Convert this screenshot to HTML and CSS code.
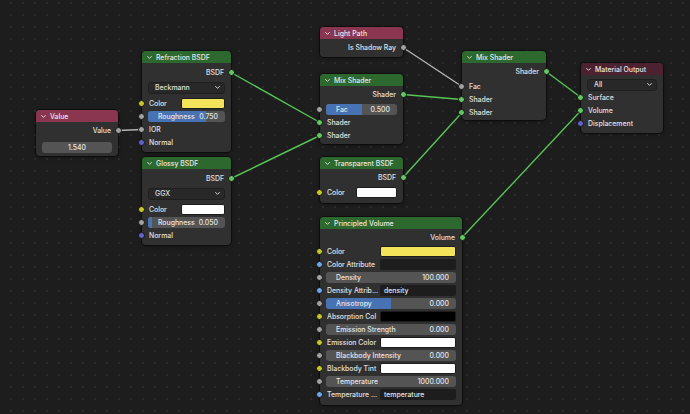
FILE: index.html
```html
<!DOCTYPE html>
<html>
<head>
<meta charset="utf-8">
<link rel="stylesheet" href="styles.css">
</head>
<body>
<div class="canvas">
  <svg class="links" width="690" height="414" viewBox="0 0 690 414">
    <line class="l-grey" x1="118" y1="130.5" x2="142" y2="129.5"/>
    <line class="l-green" x1="231" y1="72.5" x2="320" y2="122.5"/>
    <line class="l-green" x1="231" y1="178.5" x2="320" y2="135.5"/>
    <line class="l-grey" x1="403" y1="47.5" x2="462" y2="86.5"/>
    <line class="l-green" x1="403" y1="94.5" x2="462" y2="99.5"/>
    <line class="l-green" x1="403" y1="177.5" x2="462" y2="112.5"/>
    <line class="l-green" x1="546" y1="71.5" x2="581" y2="97.5"/>
    <line class="l-green" x1="462" y1="237.5" x2="581" y2="110.5"/>
  </svg>

  <!-- Value -->
  <div class="node n-value">
    <div class="hdr red"><svg class="chev" viewBox="0 0 8 8"><path d="M1.5 2.5 L4 5 L6.5 2.5"/></svg>Value</div>
    <div class="body pt2 pb2">
      <div class="row out">Value<span class="sock grey"></span></div>
      <div class="row mt4"><div class="num full center">1.540</div></div>
    </div>
  </div>

  <!-- Refraction BSDF -->
  <div class="node n-refr">
    <div class="hdr green"><svg class="chev" viewBox="0 0 8 8"><path d="M1.5 2.5 L4 5 L6.5 2.5"/></svg>Refraction BSDF</div>
    <div class="body pt3 pb3">
      <div class="row out">BSDF<span class="sock green"></span></div>
      <div class="row mt2"><div class="drop">Beckmann<svg class="dchev" viewBox="0 0 8 8"><path d="M1.5 2.5 L4 5 L6.5 2.5"/></svg></div></div>
      <div class="row mt3"><span class="sock yellow"></span><span class="lbl">Color</span><span class="swatch sw-yellow sw-small"></span></div>
      <div class="row"><span class="sock grey"></span><div class="slider full"><div class="fill" style="width:75%"></div><span class="sl-lbl">Roughness</span><span class="sl-val">0.750</span></div></div>
      <div class="row"><span class="sock grey"></span><span class="lbl">IOR</span></div>
      <div class="row"><span class="sock purple"></span><span class="lbl">Normal</span></div>
    </div>
  </div>

  <!-- Glossy BSDF -->
  <div class="node n-glossy">
    <div class="hdr green"><svg class="chev" viewBox="0 0 8 8"><path d="M1.5 2.5 L4 5 L6.5 2.5"/></svg>Glossy BSDF</div>
    <div class="body pt3 pb3">
      <div class="row out">BSDF<span class="sock green"></span></div>
      <div class="row mt2"><div class="drop">GGX<svg class="dchev" viewBox="0 0 8 8"><path d="M1.5 2.5 L4 5 L6.5 2.5"/></svg></div></div>
      <div class="row mt3"><span class="sock yellow"></span><span class="lbl">Color</span><span class="swatch sw-white sw-small"></span></div>
      <div class="row"><span class="sock grey"></span><div class="slider full"><div class="fill" style="width:5%"></div><span class="sl-lbl">Roughness</span><span class="sl-val">0.050</span></div></div>
      <div class="row"><span class="sock purple"></span><span class="lbl">Normal</span></div>
    </div>
  </div>

  <!-- Light Path -->
  <div class="node n-light">
    <div class="hdr red"><svg class="chev" viewBox="0 0 8 8"><path d="M1.5 2.5 L4 5 L6.5 2.5"/></svg>Light Path</div>
    <div class="body pt2 pb3">
      <div class="row out">Is Shadow Ray<span class="sock grey"></span></div>
    </div>
  </div>

  <!-- Mix Shader 1 -->
  <div class="node n-mix1">
    <div class="hdr green"><svg class="chev" viewBox="0 0 8 8"><path d="M1.5 2.5 L4 5 L6.5 2.5"/></svg>Mix Shader</div>
    <div class="body pt2 pb2">
      <div class="row out">Shader<span class="sock green"></span></div>
      <div class="row mt2"><span class="sock grey"></span><div class="slider full"><div class="fill" style="width:50%"></div><span class="sl-lbl">Fac</span><span class="sl-val">0.500</span></div></div>
      <div class="row"><span class="sock green"></span><span class="lbl">Shader</span></div>
      <div class="row"><span class="sock green"></span><span class="lbl">Shader</span></div>
    </div>
  </div>

  <!-- Transparent BSDF -->
  <div class="node n-transp">
    <div class="hdr green"><svg class="chev" viewBox="0 0 8 8"><path d="M1.5 2.5 L4 5 L6.5 2.5"/></svg>Transparent BSDF</div>
    <div class="body pt2 pb4">
      <div class="row out">BSDF<span class="sock green"></span></div>
      <div class="row mt2"><span class="sock yellow"></span><span class="lbl">Color</span><span class="swatch sw-white sw-t"></span></div>
    </div>
  </div>

  <!-- Principled Volume -->
  <div class="node n-vol">
    <div class="hdr green"><svg class="chev" viewBox="0 0 8 8"><path d="M1.5 2.5 L4 5 L6.5 2.5"/></svg>Principled Volume</div>
    <div class="body pt2 pb4">
      <div class="row out">Volume<span class="sock green"></span></div>
      <div class="row mt1"><span class="sock yellow"></span><span class="lbl">Color</span><span class="swatch sw-yellow sw-wide"></span></div>
      <div class="row"><span class="sock blue"></span><span class="lbl">Color Attribute</span><span class="text sw-wide"></span></div>
      <div class="row"><span class="sock grey"></span><div class="slider full"><span class="sl-lbl">Density</span><span class="sl-val">100.000</span></div></div>
      <div class="row"><span class="sock blue"></span><span class="lbl">Density Attrib...</span><span class="text sw-wide">density</span></div>
      <div class="row"><span class="sock grey"></span><div class="slider full"><div class="fill" style="width:50%"></div><span class="sl-lbl">Anisotropy</span><span class="sl-val">0.000</span></div></div>
      <div class="row"><span class="sock yellow"></span><span class="lbl">Absorption Col</span><span class="swatch sw-black sw-wide"></span></div>
      <div class="row"><span class="sock grey"></span><div class="slider full"><span class="sl-lbl">Emission Strength</span><span class="sl-val">0.000</span></div></div>
      <div class="row"><span class="sock yellow"></span><span class="lbl">Emission Color</span><span class="swatch sw-white sw-wide"></span></div>
      <div class="row"><span class="sock grey"></span><div class="slider full"><span class="sl-lbl">Blackbody Intensity</span><span class="sl-val">0.000</span></div></div>
      <div class="row"><span class="sock yellow"></span><span class="lbl">Blackbody Tint</span><span class="swatch sw-white sw-wide"></span></div>
      <div class="row"><span class="sock grey"></span><div class="slider full"><span class="sl-lbl">Temperature</span><span class="sl-val">1000.000</span></div></div>
      <div class="row"><span class="sock blue"></span><span class="lbl">Temperature ...</span><span class="text sw-wide">temperature</span></div>
    </div>
  </div>

  <!-- Mix Shader 2 -->
  <div class="node n-mix2">
    <div class="hdr green"><svg class="chev" viewBox="0 0 8 8"><path d="M1.5 2.5 L4 5 L6.5 2.5"/></svg>Mix Shader</div>
    <div class="body pt2 pb1">
      <div class="row out">Shader<span class="sock green"></span></div>
      <div class="row mt2"><span class="sock grey"></span><span class="lbl">Fac</span></div>
      <div class="row"><span class="sock green"></span><span class="lbl">Shader</span></div>
      <div class="row"><span class="sock green"></span><span class="lbl">Shader</span></div>
    </div>
  </div>

  <!-- Material Output -->
  <div class="node n-out">
    <div class="hdr dred"><svg class="chev" viewBox="0 0 8 8"><path d="M1.5 2.5 L4 5 L6.5 2.5"/></svg>Material Output</div>
    <div class="body pt3 pb3">
      <div class="row"><div class="drop">All<svg class="dchev" viewBox="0 0 8 8"><path d="M1.5 2.5 L4 5 L6.5 2.5"/></svg></div></div>
      <div class="row"><span class="sock green"></span><span class="lbl">Surface</span></div>
      <div class="row"><span class="sock green"></span><span class="lbl">Volume</span></div>
      <div class="row"><span class="sock purple"></span><span class="lbl">Displacement</span></div>
    </div>
  </div>
</div>
</body>
</html>
```
FILE: styles.css
```css
* { box-sizing: border-box; }
html, body { margin: 0; padding: 0; }
body {
  width: 690px;
  height: 414px;
  overflow: hidden;
  background: #1d1d1d;
  font-family: Inter, "DejaVu Sans", sans-serif;
  font-size: 6.9px;
  font-weight: 500;
  color: #e0e0e0;
}
.canvas {
  position: relative;
  width: 690px;
  height: 414px;
  background-color: #1d1d1d;
  background-image: radial-gradient(circle, #2c2c2c 0.9px, transparent 1.2px);
  background-size: 12px 12px;
  background-position: 5px -3px;
}
.links { position: absolute; left: 0; top: 0; z-index: 0; }
.links line { stroke-width: 1.4; stroke-linecap: round; }
.l-green { stroke: #56c456; }
.l-grey { stroke: #b4b4b4; }

.node {
  position: absolute;
  z-index: 1;
  background: #303030;
  border-radius: 4px;
  box-shadow: 0 0 0 1px rgba(0,0,0,0.45), 0 1px 4px rgba(0,0,0,0.35);
}
.n-value  { left: 36px;  top: 110px; width: 82px; }
.n-refr   { left: 142px; top: 51px;  width: 89px; }
.n-glossy { left: 142px; top: 157px; width: 89px; }
.n-light  { left: 320px; top: 27px;  width: 83px; }
.n-mix1   { left: 320px; top: 74px;  width: 83px; }
.n-transp { left: 320px; top: 157px; width: 83px; }
.n-vol    { left: 320px; top: 217px; width: 142px; }
.n-mix2   { left: 462px; top: 51px;  width: 84px; }
.n-out    { left: 581px; top: 63px;  width: 82px; }

.hdr {
  height: 12px;
  border-radius: 4px 4px 0 0;
  display: flex;
  align-items: center;
  padding-left: 4px;
  gap: 3px;
  color: #e8e8e8;
  white-space: nowrap;
  overflow: hidden;
}
.hdr.green { background: #2d682f; }
.hdr.red { background: #8a3650; }
.hdr.dred { background: #4d2230; }
.chev { width: 7px; height: 7px; flex: none; }
.chev path, .dchev path { fill: none; stroke: #dcdcdc; stroke-width: 1.1; }

.body { display: flex; flex-direction: column; }
.pt1 { padding-top: 1px; } .pt2 { padding-top: 2px; } .pt3 { padding-top: 3px; }
.pb1 { padding-bottom: 1px; } .pb2 { padding-bottom: 2px; } .pb3 { padding-bottom: 3px; } .pb4 { padding-bottom: 4px; }
.mt1 { margin-top: 1px; } .mt2 { margin-top: 2px; } .mt3 { margin-top: 3px; } .mt4 { margin-top: 4px; }

.row {
  position: relative;
  height: 13px;
  display: flex;
  align-items: center;
  padding: 0 6px 0 6px;
  white-space: nowrap;
}
.row.out { justify-content: flex-end; padding-right: 7px; }
.lbl { flex: 1; padding-left: 1px; overflow: hidden; }

.sock {
  position: absolute;
  top: 3px;
  left: -4px;
  width: 7px;
  height: 7px;
  border-radius: 50%;
  border: 1px solid #141414;
}
.row.out .sock { left: auto; right: -4px; }
.sock.green { background: #63c763; }
.sock.grey { background: #a1a1a1; }
.sock.yellow { background: #c7c729; }
.sock.purple { background: #6363c7; }
.sock.blue { background: #6ba9e8; }

.drop {
  flex: 1;
  height: 12px;
  background: #282828;
  border: 1px solid #1f1f1f;
  border-radius: 3px;
  display: flex;
  align-items: center;
  justify-content: space-between;
  padding: 0 3px 0 6px;
  color: #e0e0e0;
}
.dchev { width: 7px; height: 7px; }

.num {
  height: 11px;
  background: #545454;
  border-radius: 3px;
  display: flex;
  align-items: center;
  color: #e6e6e6;
}
.num.full { flex: 1; }
.num.center { justify-content: center; }

.slider {
  position: relative;
  height: 11px;
  background: #545454;
  border-radius: 3px;
  overflow: hidden;
  display: flex;
  align-items: center;
  justify-content: space-between;
  padding: 0 7px 0 10px;
  color: #e6e6e6;
}
.slider.full { flex: 1; }
.fill { position: absolute; left: 0; top: 0; bottom: 0; background: #4772b3; }
.sl-lbl, .sl-val { position: relative; }

.swatch {
  height: 11px;
  border-radius: 2px;
  border: 1px solid #1c1c1c;
  flex: none;
}
.sw-yellow { background: #f3e35a; }
.sw-white { background: #ffffff; }
.sw-black { background: #000000; }
.sw-small { width: 44px; }
.sw-t { width: 41px; }
.sw-wide { width: 76px; }

.text {
  height: 11px;
  background: #1d1d1d;
  border-radius: 2px;
  display: flex;
  align-items: center;
  padding-left: 4px;
  color: #e6e6e6;
  flex: none;
}
```
